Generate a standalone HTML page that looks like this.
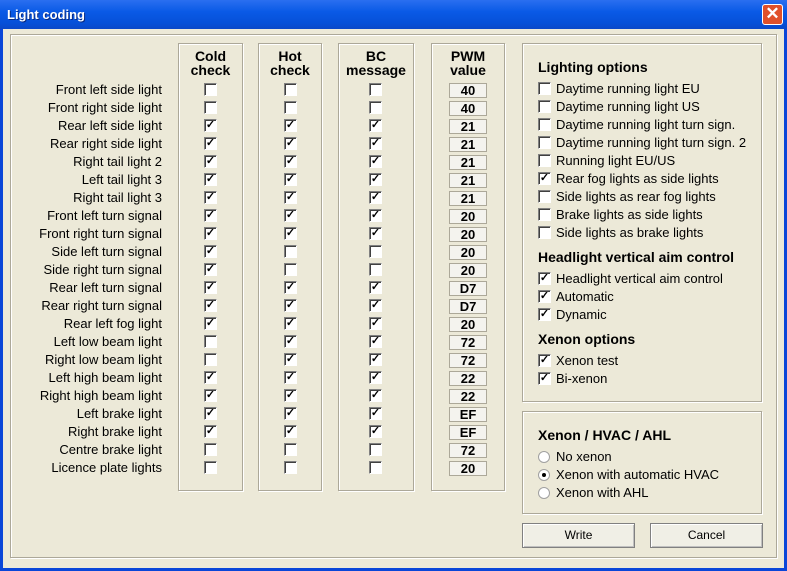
<!DOCTYPE html><html><head><style>
*{margin:0;padding:0;box-sizing:border-box}
body{width:787px;height:571px;overflow:hidden;background:#0a46d8;font-family:"Liberation Sans",Arial,sans-serif;font-size:13px;color:#000;position:relative}
.title{position:absolute;left:0;top:0;width:787px;height:29px;background:linear-gradient(#2a6ff0,#0a5ae6 40%,#0650d8 80%,#0a48c8);color:#fff;font-weight:bold;font-size:13px;padding:7px 0 0 7px;text-shadow:1px 1px #0a2a80}
.close{position:absolute;left:762px;top:4px;width:21px;height:21px;border:1px solid #fff;border-radius:3px;background:#e0502a;color:#fff;font-size:17px;line-height:18px;text-align:center;font-weight:bold}
.win{position:absolute;left:3px;top:29px;width:781px;height:539px;background:#ece9d8}
.grp{position:absolute;border:1px solid #aca899;box-shadow:1px 1px 0 #fff inset,1px 1px 0 #fff}
.lbl{position:absolute;right:625px;white-space:nowrap;line-height:15px}
.cb{position:absolute;width:13px;height:13px;background:#fff;border-top:1px solid #808080;border-left:1px solid #808080;border-right:1px solid #fff;border-bottom:1px solid #fff;box-shadow:1px 1px 0 #404040 inset;font-size:11px;line-height:11px;text-align:center;font-weight:bold}
.pw{position:absolute;width:38px;height:15px;background:#f4f3ee;border:1px solid #aca899;font-weight:bold;text-align:center;line-height:13px;font-size:13px}
.hd{position:absolute;font-weight:bold;font-size:14px;text-align:center;line-height:14px}
.ot{position:absolute;left:553px;white-space:nowrap;line-height:15px}
.oh{position:absolute;left:535px;font-weight:bold;font-size:14px}
.rb{position:absolute;left:535px;width:12px;height:12px;border-radius:50%;background:#fff;border:1px solid #a0a0a0}
.btn{position:absolute;height:25px;border:1px solid #808080;box-shadow:1px 1px 0 #fff inset,-1px -1px 0 #c0c0c0 inset;background:#f0efe6;text-align:center;line-height:23px;font-size:12px}
</style></head><body>
<div class="title">Light coding</div><div class="close">✕</div>
<div class="win"></div>
<div class="grp" style="left:10px;top:34px;width:767px;height:524px"></div>
<div class="grp" style="left:178px;top:43px;width:65px;height:448px"></div>
<div class="grp" style="left:258px;top:43px;width:64px;height:448px"></div>
<div class="grp" style="left:338px;top:43px;width:76px;height:448px"></div>
<div class="grp" style="left:431px;top:43px;width:74px;height:448px"></div>
<div class="grp" style="left:522px;top:43px;width:240px;height:359px"></div>
<div class="grp" style="left:522px;top:411px;width:240px;height:103px"></div>
<div class="hd" style="left:178px;top:49px;width:65px">Cold<br>check</div>
<div class="hd" style="left:258px;top:49px;width:64px">Hot<br>check</div>
<div class="hd" style="left:338px;top:49px;width:76px">BC<br>message</div>
<div class="hd" style="left:431px;top:49px;width:74px">PWM<br>value</div>
<div id="rows"></div>
<div class="oh" style="left:538px;top:59px">Lighting options</div>
<div class="oh" style="left:538px;top:249px">Headlight vertical aim control</div>
<div class="oh" style="left:538px;top:331px">Xenon options</div>
<div class="oh" style="left:538px;top:427px">Xenon / HVAC / AHL</div>
<div id="opts"></div>
<div class="rb" style="left:538px;top:451px"></div><div class="ot" style="left:556px;top:449px">No xenon</div>
<div class="rb" style="left:538px;top:469px"><div style="width:4px;height:4px;background:#000;border-radius:50%;margin:3px"></div></div><div class="ot" style="left:556px;top:467px">Xenon with automatic HVAC</div>
<div class="rb" style="left:538px;top:487px"></div><div class="ot" style="left:556px;top:485px">Xenon with AHL</div>
<div class="btn" style="left:522px;top:523px;width:113px">Write</div>
<div class="btn" style="left:650px;top:523px;width:113px">Cancel</div>
<script>
var d=[["Front left side light",0,0,0,"40"],["Front right side light",0,0,0,"40"],["Rear left side light",1,1,1,"21"],["Rear right side light",1,1,1,"21"],["Right tail light 2",1,1,1,"21"],["Left tail light 3",1,1,1,"21"],["Right tail light 3",1,1,1,"21"],["Front left turn signal",1,1,1,"20"],["Front right turn signal",1,1,1,"20"],["Side left turn signal",1,0,0,"20"],["Side right turn signal",1,0,0,"20"],["Rear left turn signal",1,1,1,"D7"],["Rear right turn signal",1,1,1,"D7"],["Rear left fog light",1,1,1,"20"],["Left low beam light",0,1,1,"72"],["Right low beam light",0,1,1,"72"],["Left high beam light",1,1,1,"22"],["Right high beam light",1,1,1,"22"],["Left brake light",1,1,1,"EF"],["Right brake light",1,1,1,"EF"],["Centre brake light",0,0,0,"72"],["Licence plate lights",0,0,0,"20"]];
var h="";d.forEach(function(r,i){var y=90+i*18;h+='<div class="lbl" style="top:'+(y-8)+'px">'+r[0]+'</div>';[204,284,369].forEach(function(x,j){h+='<div class="cb" style="left:'+x+'px;top:'+(y-7)+'px">'+(r[j+1]?'✓':'')+'</div>'});h+='<div class="pw" style="left:449px;top:'+(y-7)+'px">'+r[4]+'</div>'});
document.getElementById("rows").innerHTML=h;
var o=[["Daytime running light EU",0,89],["Daytime running light US",0,107],["Daytime running light turn sign.",0,125],["Daytime running light turn sign. 2",0,143],["Running light EU/US",0,161],["Rear fog lights as side lights",1,179],["Side lights as rear fog lights",0,197],["Brake lights as side lights",0,215],["Side lights as brake lights",0,233],["Headlight vertical aim control",1,279],["Automatic",1,297],["Dynamic",1,315],["Xenon test",1,361],["Bi-xenon",1,379]];
h="";o.forEach(function(r){h+='<div class="cb" style="left:538px;top:'+(r[2]-7)+'px">'+(r[1]?'✓':'')+'</div><div class="ot" style="left:556px;top:'+(r[2]-8)+'px">'+r[0]+'</div>'});
document.getElementById("opts").innerHTML=h;
</script>
</body></html>
